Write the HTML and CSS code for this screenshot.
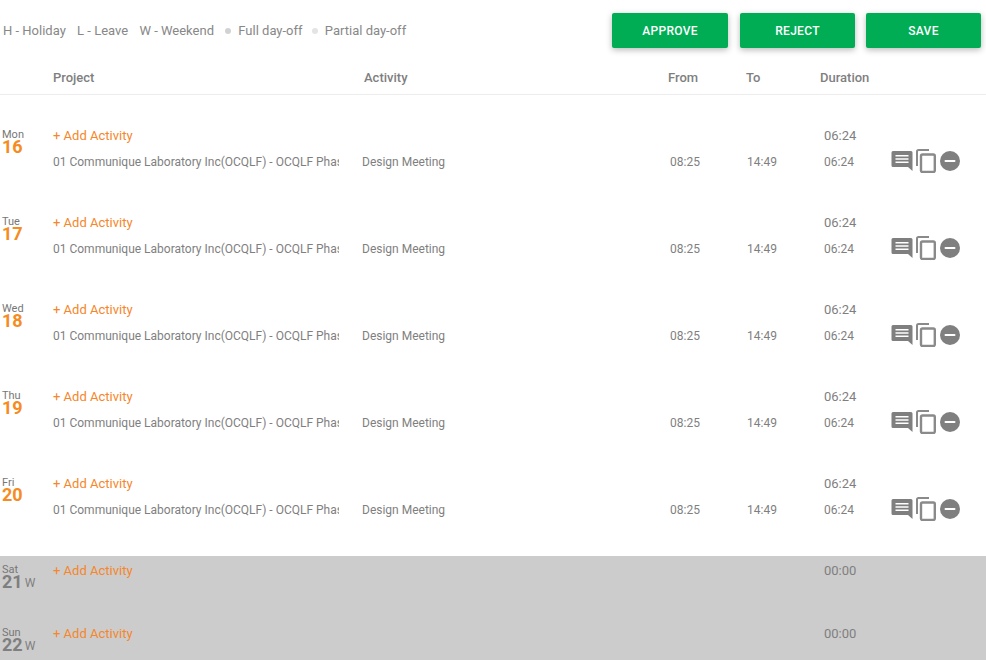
FILE: index.html
```html
<!DOCTYPE html>
<html lang="en">
<head>
<meta charset="utf-8">
<title>Timesheet</title>
<link rel="stylesheet" href="styles.css">
</head>
<body>
<svg class="defs" width="0" height="0" aria-hidden="true">
  <symbol id="i-comment" viewBox="0 0 22 22"><path d="M2 1h18a1.500 1.500 0 0 1 1.500 1.500V21L17 17H2a1.500 1.500 0 0 1-1.500-1.500v-13A1.500 1.500 0 0 1 2 1z" fill="#7f7f7f"/><path d="M4.500 5h13v1.500h-13zM4.500 8.200h13v1.500h-13zM4.500 11.400h13v1.500h-13z" fill="#fff"/></symbol>
  <symbol id="i-copy" viewBox="0 0 20 24"><path d="M1 17V2.500A1.500 1.500 0 0 1 2.500 1H13" fill="none" stroke="#8a8a8a" stroke-width="2"/><rect x="5" y="5.500" width="13.800" height="17.500" rx="1.500" fill="none" stroke="#8a8a8a" stroke-width="2.400"/></symbol>
  <symbol id="i-minus" viewBox="0 0 20 20"><circle cx="10" cy="10" r="10" fill="#7f7f7f"/><rect x="4.500" y="9" width="11" height="2" rx="1" fill="#fff"/></symbol>
</svg>

<header class="top">
  <div class="legend">
    <span>H - Holiday</span><span>L - Leave</span><span>W - Weekend</span>
    <span class="key"><i class="dot dot-full"></i>Full day-off</span>
    <span class="key"><i class="dot dot-part"></i>Partial day-off</span>
  </div>
  <div class="actions">
    <button class="btn btn-approve">APPROVE</button>
    <button class="btn btn-reject">REJECT</button>
    <button class="btn btn-save">SAVE</button>
  </div>
</header>

<div class="cols head">
  <span></span><span>Project</span><span class="h-activity">Activity</span><span class="h-from">From</span><span class="h-to">To</span><span class="h-dur">Duration</span>
</div>

<main>
  <section class="day">
    <div class="date"><span class="wd">Mon</span><b class="num">16</b></div>
    <div class="cols add-row"><a class="add">+ Add Activity</a><span class="total">06:24</span></div>
    <div class="cols entry"><span class="proj">01 Communique Laboratory Inc(OCQLF) - OCQLF Phase 1</span><span class="act">Design Meeting</span><span class="t-from">08:25</span><span class="t-to">14:49</span><span class="t-dur">06:24</span><span class="tools"><svg class="i1"><use href="#i-comment"/></svg><svg class="i2"><use href="#i-copy"/></svg><svg class="i3"><use href="#i-minus"/></svg></span></div>
  </section>
  <section class="day">
    <div class="date"><span class="wd">Tue</span><b class="num">17</b></div>
    <div class="cols add-row"><a class="add">+ Add Activity</a><span class="total">06:24</span></div>
    <div class="cols entry"><span class="proj">01 Communique Laboratory Inc(OCQLF) - OCQLF Phase 1</span><span class="act">Design Meeting</span><span class="t-from">08:25</span><span class="t-to">14:49</span><span class="t-dur">06:24</span><span class="tools"><svg class="i1"><use href="#i-comment"/></svg><svg class="i2"><use href="#i-copy"/></svg><svg class="i3"><use href="#i-minus"/></svg></span></div>
  </section>
  <section class="day">
    <div class="date"><span class="wd">Wed</span><b class="num">18</b></div>
    <div class="cols add-row"><a class="add">+ Add Activity</a><span class="total">06:24</span></div>
    <div class="cols entry"><span class="proj">01 Communique Laboratory Inc(OCQLF) - OCQLF Phase 1</span><span class="act">Design Meeting</span><span class="t-from">08:25</span><span class="t-to">14:49</span><span class="t-dur">06:24</span><span class="tools"><svg class="i1"><use href="#i-comment"/></svg><svg class="i2"><use href="#i-copy"/></svg><svg class="i3"><use href="#i-minus"/></svg></span></div>
  </section>
  <section class="day">
    <div class="date"><span class="wd">Thu</span><b class="num">19</b></div>
    <div class="cols add-row"><a class="add">+ Add Activity</a><span class="total">06:24</span></div>
    <div class="cols entry"><span class="proj">01 Communique Laboratory Inc(OCQLF) - OCQLF Phase 1</span><span class="act">Design Meeting</span><span class="t-from">08:25</span><span class="t-to">14:49</span><span class="t-dur">06:24</span><span class="tools"><svg class="i1"><use href="#i-comment"/></svg><svg class="i2"><use href="#i-copy"/></svg><svg class="i3"><use href="#i-minus"/></svg></span></div>
  </section>
  <section class="day">
    <div class="date"><span class="wd">Fri</span><b class="num">20</b></div>
    <div class="cols add-row"><a class="add">+ Add Activity</a><span class="total">06:24</span></div>
    <div class="cols entry"><span class="proj">01 Communique Laboratory Inc(OCQLF) - OCQLF Phase 1</span><span class="act">Design Meeting</span><span class="t-from">08:25</span><span class="t-to">14:49</span><span class="t-dur">06:24</span><span class="tools"><svg class="i1"><use href="#i-comment"/></svg><svg class="i2"><use href="#i-copy"/></svg><svg class="i3"><use href="#i-minus"/></svg></span></div>
  </section>
  <div class="weekend">
    <section class="day off">
      <div class="date"><span class="wd">Sat</span><span class="numline"><b class="num">21</b><span class="w">W</span></span></div>
      <div class="cols add-row"><a class="add">+ Add Activity</a><span class="total">00:00</span></div>
    </section>
    <section class="day off">
      <div class="date"><span class="wd">Sun</span><span class="numline"><b class="num">22</b><span class="w">W</span></span></div>
      <div class="cols add-row"><a class="add">+ Add Activity</a><span class="total">00:00</span></div>
    </section>
  </div>
</main>
</body>
</html>
```
FILE: styles.css
```css
* { box-sizing: border-box; }
html, body { margin: 0; padding: 0; }
body {
  width: 986px;
  height: 660px;
  overflow: hidden;
  background: #fff;
  color: #7f7f7f;
  font-family: Roboto, "Liberation Sans", sans-serif;
  font-size: 12px;
}
.defs { position: absolute; }

.top {
  display: flex;
  justify-content: space-between;
  align-items: flex-start;
  height: 60px;
  padding: 13px 5px 0 3px;
}
.legend {
  display: flex;
  align-items: center;
  gap: 11.3px;
  height: 35px;
  font-size: 13px;
  color: #888;
}
.key { display: flex; align-items: center; }
.dot {
  width: 6px;
  height: 6px;
  border-radius: 50%;
  margin-right: 7px;
}
.dot-full { background: #d2d2d2; }
.dot-part { background: #e4e4e4; margin-left: -2px; }

.actions { display: flex; gap: 11px; }
.btn {
  height: 35px;
  border: 0;
  border-radius: 2px;
  padding: 0;
  background: #00ad54;
  color: #fff;
  font: 500 12px Roboto, sans-serif;
  letter-spacing: 0.3px;
  box-shadow: 0 2px 6px rgba(0, 0, 0, 0.28);
}
.btn-approve { width: 116px; margin-right: 1px; }
.btn-reject { width: 115px; }
.btn-save { width: 115px; }

.cols {
  display: grid;
  grid-template-columns: 53px 309px 308px 77px 77px 67px 1fr;
  align-items: center;
}
.head {
  height: 35px;
  border-bottom: 1px solid #ececec;
  font-weight: 500;
  font-size: 13px;
  color: #7f7f7f;
}
.h-activity { margin-left: 2px; }
.h-from { margin-left: -2px; }
.h-to { margin-left: -1px; }
.h-dur { margin-left: -4px; white-space: nowrap; }

main { padding-top: 26px; }
.day {
  position: relative;
  height: 87px;
  padding-top: 1px;
}
.date {
  position: absolute;
  left: 2px;
  top: 8px;
  display: flex;
  flex-direction: column;
  line-height: 1;
}
.wd { font-size: 11px; line-height: 11px; color: #777; }
.num {
  font-size: 18px;
  line-height: 14px;
  font-weight: 700;
  color: #f68b1f;
}
.add-row {
  grid-template-columns: 53px 771px 1fr;
  height: 26px;
}
.add-row .add { grid-column: 2; }
.add-row .total { grid-column: 3; }
.add {
  color: #f6862a;
  font-size: 13px;
}
.total { font-size: 13px; color: #7f7f7f; }
.entry {
  grid-template-columns: 286px 331px 77px 77px 67px 1fr;
  margin-left: 53px;
  height: 27px;
  font-size: 12px;
}
.proj {
  white-space: nowrap;
  overflow: hidden;
}
.act { padding-left: 23px; white-space: nowrap; }
.tools {
  display: flex;
  align-items: center;
  gap: 2px;
  margin-bottom: 2px;
}
.i1 { width: 22px; height: 22px; }
.i2 { width: 20px; height: 24px; margin-left: 1px; }
.i3 { width: 20px; height: 20px; margin-left: 2px; }

.weekend {
  background: #ccc;
  height: 104px;
}
.off { height: 63px; padding-top: 0; }
.off .num { color: #7f7f7f; }
.off .date { top: 8px; }
.off .add-row { height: 29px; }
.numline { display: flex; align-items: flex-end; gap: 2px; }
.w { font-size: 12px; line-height: 12px; color: #7f7f7f; }
```
